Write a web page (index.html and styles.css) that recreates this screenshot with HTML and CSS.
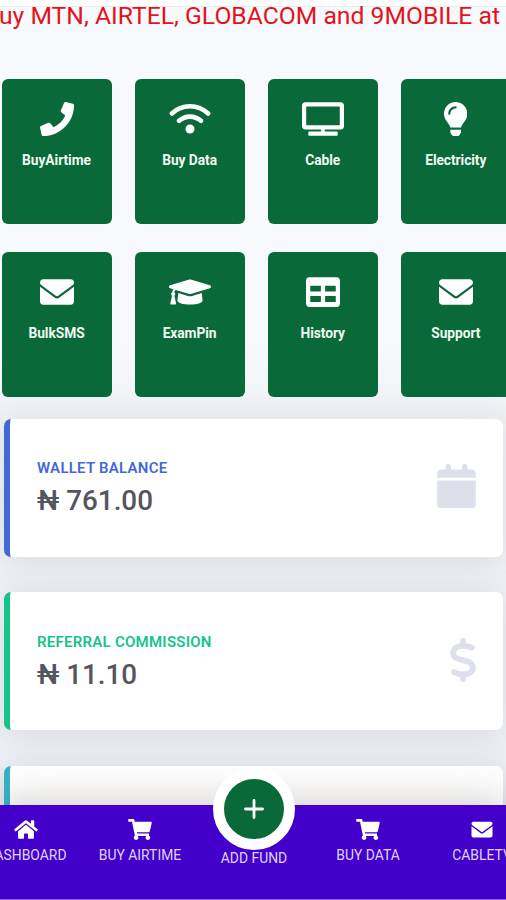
FILE: index.html
```
<!DOCTYPE html>
<html lang="en">
<head>
<meta charset="utf-8">
<meta name="viewport" content="width=device-width, initial-scale=1">
<title>Dashboard</title>
<link rel="stylesheet" href="styles.css">
</head>
<body>
<svg class="sprite" aria-hidden="true">
  <symbol id="envelope" viewBox="0 0 512 512"><path d="M48 64C21.500 64 0 85.500 0 112c0 15.100 7.100 29.300 19.200 38.400L236.800 313.600c11.400 8.500 27 8.500 38.400 0L492.800 150.400c12.100-9.100 19.200-23.300 19.200-38.400c0-26.500-21.500-48-48-48H48zM0 176V400c0 26.500 21.500 48 48 48H464c26.500 0 48-21.500 48-48V176L294.400 339.200c-22.800 17.100-54 17.100-76.800 0L0 176z"/></symbol>
  <symbol id="cart" viewBox="0 0 576 512"><path d="M528.12 301.319l47.273-208C578.806 78.301 567.391 64 551.99 64H159.208l-9.166-44.810C147.758 8.021 137.930 0 126.529 0H24C10.745 0 0 10.745 0 24v16c0 13.255 10.745 24 24 24h69.883l70.248 343.435C147.325 417.100 136 435.222 136 456c0 30.928 25.072 56 56 56s56-25.072 56-56c0-15.674-6.447-29.835-16.824-40h209.647C430.447 426.165 424 440.326 424 456c0 30.928 25.072 56 56 56s56-25.072 56-56c0-22.172-12.888-41.332-31.579-50.405l5.517-24.276c3.413-15.018-8.002-29.319-23.403-29.319H218.117l-6.545-32h293.145c11.206 0 20.920-7.754 23.403-18.681z"/></symbol>
</svg>
<div class="screen">
  <div class="marquee"><p>uy MTN, AIRTEL, GLOBACOM and 9MOBILE at</p></div>

  <main>
    <section class="tiles">
      <a class="tile">
        <svg class="w34" viewBox="0 0 512 512"><path d="M493.400 24.600l-104-24c-11.300-2.600-22.900 3.300-27.500 13.900l-48 112c-4.200 9.800-1.400 21.300 6.900 28l60.600 49.600c-36 76.700-98.900 140.500-177.200 177.200l-49.600-60.600c-6.800-8.300-18.200-11.100-28-6.900l-112 48C3.900 366.500-2 378.100.6 389.400l24 104C27.1 504.200 36.700 512 48 512c256.100 0 464-207.500 464-464 0-11.200-7.700-20.900-18.600-23.400z"/></svg>
        <span>BuyAirtime</span>
      </a>
      <a class="tile">
        <svg class="w42 wifi" viewBox="0 0 42 34"><path d="M2.900 11.500C13 1.900 29 1.900 39.100 11.500M10.100 18.800c6.300-5.600 15.500-5.600 21.800 0"/><circle cx="21" cy="27" r="4.500"/></svg>
        <span>Buy Data</span>
      </a>
      <a class="tile">
        <svg class="w42" viewBox="0 0 640 512"><path fill-rule="evenodd" d="M592 0H48C21.500 0 0 21.500 0 48v320c0 26.500 21.500 48 48 48h245.100v32H112c-8.800 0-16 7.200-16 16v32c0 8.800 7.200 16 16 16h416c8.800 0 16-7.200 16-16v-32c0-8.800-7.200-16-16-16H346.900v-32H592c26.500 0 48-21.500 48-48V48c0-26.500-21.500-48-48-48zm-16 352H64V64h512v288z"/></svg>
        <span>Cable</span>
      </a>
      <a class="tile">
        <svg class="w23" viewBox="0 0 352 512"><path d="M96.060 454.350c.01 6.290 1.870 12.450 5.360 17.690l17.090 25.690a31.990 31.990 0 0 0 26.640 14.280h61.710a31.990 31.990 0 0 0 26.640-14.280l17.090-25.690a31.989 31.989 0 0 0 5.360-17.690l.04-38.350H96.010l.05 38.350zM0 176c0 44.370 16.450 84.850 43.560 115.780 16.520 18.850 42.360 58.230 52.210 91.450.04.260.07.520.11.780h160.240c.04-.26.07-.51.110-.78 9.850-33.220 35.690-72.600 52.210-91.450C335.550 260.850 352 220.370 352 176 352 78.610 272.910-.3 175.450 0 73.440.310 0 82.970 0 176zm176-80c-44.110 0-80 35.890-80 80 0 8.840-7.160 16-16 16s-16-7.160-16-16c0-61.760 50.240-112 112-112 8.840 0 16 7.160 16 16s-7.160 16-16 16z"/></svg>
        <span>Electricity</span>
      </a>
      <a class="tile"><svg class="w34"><use href="#envelope"/></svg><span>BulkSMS</span></a>
      <a class="tile">
        <svg class="w42" viewBox="0 0 640 512"><path d="M622.340 153.200L343.400 67.500c-15.200-4.670-31.600-4.670-46.790 0L17.660 153.200c-23.540 7.230-23.540 38.360 0 45.590l48.630 14.940c-10.670 13.190-17.230 29.280-17.880 46.900C38.780 266.150 32 276.110 32 288c0 10.780 5.680 19.850 13.860 25.650L20.330 428.530C18.110 438.520 25.710 448 35.940 448h56.110c10.240 0 17.840-9.480 15.620-19.470L82.140 313.650C90.320 307.850 96 298.780 96 288c0-11.570-6.470-21.250-15.660-26.870.76-15.020 8.440-28.300 20.690-36.720L296.600 284.500c9.060 2.780 26.440 6.250 46.790 0l278.950-85.700c23.550-7.240 23.550-38.360 0-45.600zM352.790 315.090c-28.530 8.760-52.840 3.920-65.590 0l-145.020-44.550L128 384c0 35.350 85.960 64 192 64s192-28.650 192-64l-14.180-113.470-145.030 44.560z"/></svg>
        <span>ExamPin</span>
      </a>
      <a class="tile">
        <svg class="w34" viewBox="0 0 512 512"><path d="M464 32H48C21.490 32 0 53.490 0 80v352c0 26.510 21.490 48 48 48h416c26.510 0 48-21.490 48-48V80c0-26.510-21.490-48-48-48zM224 406H64v-90h160v90zm0-156H64v-90h160v90zm224 156H288v-90h160v90zm0-156H288v-90h160v90z"/></svg>
        <span>History</span>
      </a>
      <a class="tile"><svg class="w34"><use href="#envelope"/></svg><span>Support</span></a>
    </section>

    <section class="stats">
      <article class="stat primary">
        <div><h2>WALLET BALANCE</h2><strong>₦ 761.00</strong></div>
        <svg class="calendar" viewBox="0 0 448 512"><path d="M96 32V64H48C21.500 64 0 85.500 0 112v48H448V112c0-26.500-21.500-48-48-48H352V32c0-17.700-14.300-32-32-32s-32 14.300-32 32V64H160V32c0-17.700-14.300-32-32-32S96 14.300 96 32zM448 192H0V480c0 17.700 14.300 32 32 32H416c17.700 0 32-14.300 32-32V192z"/></svg>
      </article>
      <article class="stat success">
        <div><h2>REFERRAL COMMISSION</h2><strong>₦ 11.10</strong></div>
        <svg class="dollar" viewBox="0 0 26 44"><path d="M13 2.900v5M13 36.300v4.800M21.800 9.500C19 8.300 16 7.800 13 7.800 7 7.800 3.200 10.500 3.200 15c0 5 4.800 6 9.800 7.300 5 1.200 9.800 2.200 9.800 7.200 0 4.500-4 6.800-9.300 6.800-3.500 0-7-1-9.300-2.200"/></svg>
      </article>
      <article class="stat info"></article>
    </section>
  </main>

  <nav>
    <a>
      <svg class="home" viewBox="0 0 576 512"><path d="M280.370 148.260L96 300.110V464a16 16 0 0 0 16 16l112.060-.29a16 16 0 0 0 15.920-16V368a16 16 0 0 1 16-16h64a16 16 0 0 1 16 16v95.640a16 16 0 0 0 16 16.050L464 480a16 16 0 0 0 16-16V300L295.670 148.260a12.190 12.190 0 0 0-15.300 0zM571.600 251.470L488 182.560V44.050a12 12 0 0 0-12-12h-56a12 12 0 0 0-12 12v72.610L318.470 43a48 48 0 0 0-61 0L4.340 251.470a12 12 0 0 0-1.600 16.900l25.500 31A12 12 0 0 0 45.150 301l235.220-193.740a12.190 12.190 0 0 1 15.300 0L530.900 301a12 12 0 0 0 16.900-1.600l25.500-31a12 12 0 0 0-1.700-16.930z"/></svg>
      <span>DASHBOARD</span>
    </a>
    <a><svg class="basket"><use href="#cart"/></svg><span>BUY AIRTIME</span></a>
    <a class="fund">
      <i class="fab"><svg viewBox="0 0 20 20"><path d="M10 1.500v17M1.500 10h17"/></svg></i>
      <span>ADD FUND</span>
    </a>
    <a><svg class="basket"><use href="#cart"/></svg><span>BUY DATA</span></a>
    <a><svg class="mail"><use href="#envelope"/></svg><span>CABLETV</span></a>
  </nav>
</div>
</body>
</html>
```
FILE: styles.css
```
* { box-sizing: border-box; }
body { margin: 0; font-family: Roboto, "Liberation Sans", sans-serif; }
svg { display: block; fill: currentColor; }
.sprite { position: absolute; width: 0; height: 0; }

.screen {
  height: 900px;
  overflow: hidden;
  display: flex;
  flex-direction: column;
  background: linear-gradient(#f8f9fd 0, #f8f9fd 340px, #f1f2f6 410px, #eeeff4 100%);
}
.marquee {
  flex: none;
  height: 78.500px;
  border-top: 6px solid #fff;
  overflow: hidden;
  box-shadow: inset 0 1px #e7ecec;
}
.marquee p {
  margin: -4px 0 0 -1px;
  font-size: 24.700px;
  line-height: 28px;
  color: #e3131b;
  white-space: nowrap;
}

main { flex: 1; min-height: 0; overflow: hidden; }
.tiles {
  display: grid;
  grid-template-columns: repeat(4, 110px);
  grid-auto-rows: 145px;
  gap: 28px 23.100px;
  padding-left: 1.500px;
}
.tile {
  display: flex;
  flex-direction: column;
  align-items: center;
  padding-top: 23px;
  border-radius: 6px;
  background: #0a6938;
  color: #fff;
}
.tile svg { height: 34px; }
.tile span {
  margin-top: 15.500px;
  font-size: 13.800px;
  line-height: 18px;
  font-weight: 700;
  letter-spacing: -0.005em;
  color: #eefaf2;
  white-space: nowrap;
}
.w34 { width: 34px; }
.w42 { width: 42px; }
.w23 { width: 23.400px; }
.wifi path { fill: none; stroke: currentColor; stroke-width: 4.600; stroke-linecap: round; }

.stats {
  display: grid;
  grid-auto-rows: 138px;
  gap: 35.500px;
  padding: 22px 3px 0 4px;
}
.stat {
  display: flex;
  align-items: center;
  justify-content: space-between;
  padding: 0 27px 0 27px;
  border-left: 6px solid;
  border-radius: 7px;
  background: #fff;
  box-shadow: 0 3px 34px rgba(58, 59, 69, .13);
}
.stat h2 {
  margin: 2px 0 7px;
  font-size: 15px;
  line-height: 18px;
  font-weight: 600;
  letter-spacing: 0.017em;
}
.stat strong {
  display: block;
  font-size: 27.800px;
  line-height: 34px;
  font-weight: 500;
  color: #54555e;
}
.stat svg { color: #dddfeb; height: 44px; margin-top: -3px; }
.calendar { width: 39px; }
.dollar { width: 26px; fill: none; stroke: currentColor; stroke-width: 5.800; stroke-linecap: round; }
.primary { color: #4568d8; }
.success { color: #16c48a; }
.info { color: #32b5c7; }

nav {
  flex: none;
  height: 95px;
  display: grid;
  grid-template-columns: repeat(5, 114px);
  justify-content: center;
  padding-left: 2px;
  position: relative;
  background: #4300cb;
  border-bottom: 1px solid #8b63dc;
  color: #fff;
  box-shadow: 0 -4px 40px rgba(70, 60, 50, .25);
}
nav a {
  display: flex;
  flex-direction: column;
  align-items: center;
  padding-top: 13.500px;
}
nav svg { height: 21px; }
nav span {
  margin-top: 7px;
  font-size: 13.900px;
  line-height: 17px;
  color: #ded4fa;
  white-space: nowrap;
}
.home { width: 24px; }
.basket { width: 24px; }
.mail { width: 22px; }
.fund { padding-top: 0; }
.fab {
  width: 82px;
  height: 82px;
  margin-top: -37px;
  border: 11px solid #fff;
  border-radius: 50%;
  background: #0a6938;
  display: flex;
  align-items: center;
  justify-content: center;
}
.fab svg { width: 20px; height: 20px; fill: none; stroke: #fff; stroke-width: 2.800; stroke-linecap: round; }
.fund span { margin-top: 0; }
```
